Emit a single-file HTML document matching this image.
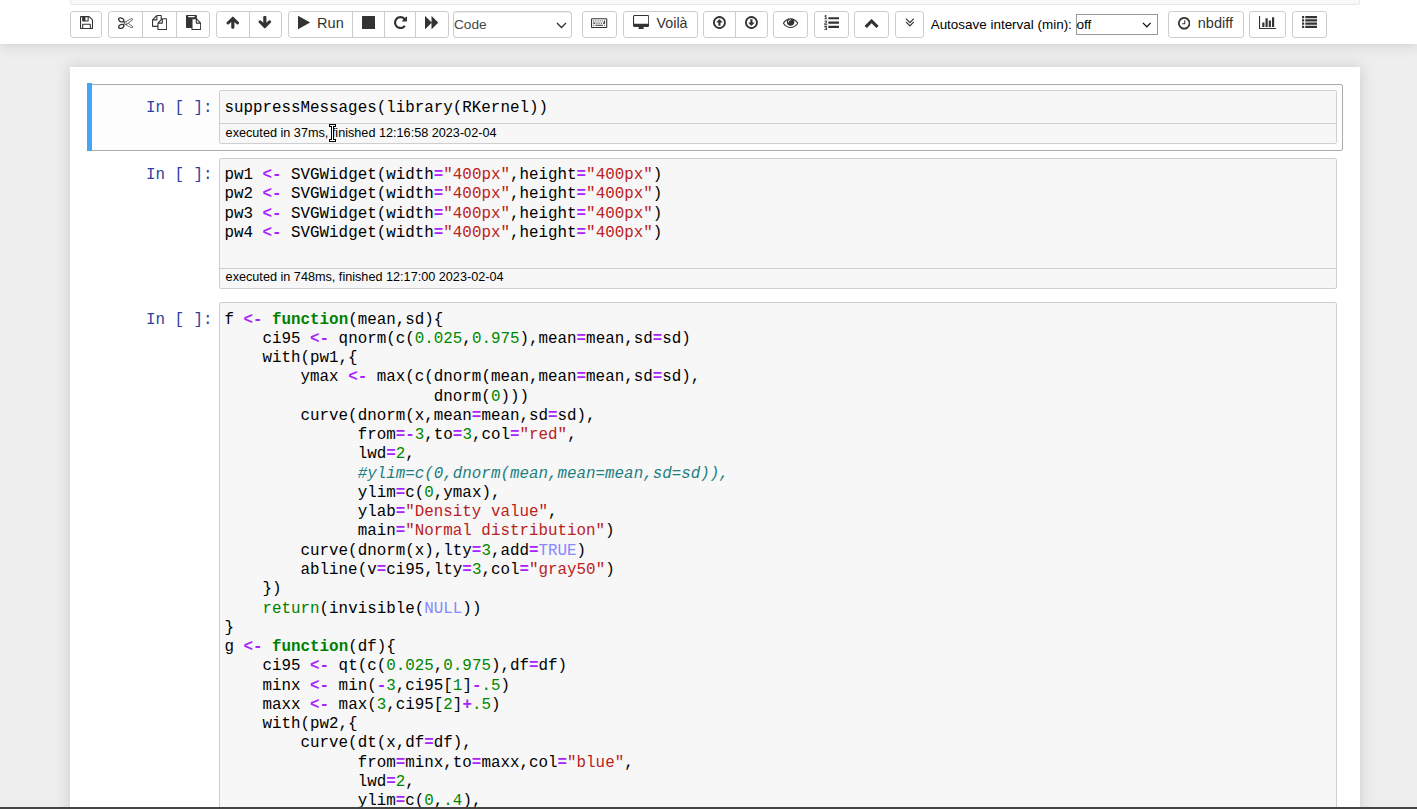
<!DOCTYPE html>
<html lang="en"><head><meta charset="utf-8"><title>Notebook</title>
<style>
html,body{margin:0;padding:0;overflow:hidden}
body{width:1417px;height:809px;overflow:hidden;position:relative;background:#eee;font-family:"Liberation Sans",Arial,sans-serif;font-size:14.3px;color:#333}
#site{position:absolute;left:0;top:0;width:1417px;height:809px;background:#eee}
#header{position:absolute;left:0;top:0;width:1417px;height:44px;background:#fff;box-shadow:0 0 13px 1px rgba(87,87,87,.2);z-index:10}
#menubar{position:absolute;left:70px;top:-30px;width:1288px;height:32.6px;background:#f8f8f8;border:1px solid #e7e7e7;border-radius:2.2px}
#nbc{position:absolute;left:70px;top:67px;width:1290px;height:800px;background:#fff;box-shadow:0 0 13px 1px rgba(87,87,87,.2);z-index:1}
#cells{position:absolute;left:0;top:0;z-index:2}
#bottombar{position:absolute;left:0;top:807px;width:1417px;height:2px;background:#444;z-index:20}
.btn{position:absolute;top:11px;height:27px;box-sizing:border-box;border:1px solid #ccc;background:#fff;border-radius:3.2px;text-align:center;white-space:nowrap;line-height:20px;color:#333;font-size:14.3px}
.btn.first{border-radius:3.2px 0 0 3.2px}
.btn.mid{border-radius:0}
.btn.last{border-radius:0 3.2px 3.2px 0}
.ic{position:absolute;display:block}
.lbl{position:absolute;white-space:nowrap;line-height:normal;color:#333}
.sel{position:absolute;box-sizing:border-box;border:1px solid #ccc;border-radius:3.2px;background:#fff;font-size:13.65px;color:#484848;box-shadow:inset 0 1px 1px rgba(0,0,0,.075)}
.seltxt{position:absolute;left:0.3px;top:4.0px;line-height:18px}
.chev{position:absolute;right:4.7px;top:9.7px}
.aslabel{position:absolute;font-size:13.45px;line-height:20px;color:#000;white-space:nowrap}
.sel2{position:absolute;box-sizing:border-box;border:1px solid #999;background:#fff;font-size:13.6px;color:#000}
.seltxt2{position:absolute;left:-0.2px;top:1.1px;line-height:18px}
.chev2{position:absolute;right:5.8px;top:7.6px}
.cell{position:absolute;left:87px;width:1256px;box-sizing:border-box;border:1px solid transparent;border-radius:2.2px;padding:5.5px;display:flex}
.cell.selected{border-color:#ababab;background:#fdfdfd;padding-top:5px;padding-bottom:6px}
.cell.selected:before{content:"";position:absolute;left:-1px;top:-2px;width:5px;height:calc(100% + 3px);background:#42A5F5}
.prompt{flex:0 0 125.6px;box-sizing:border-box;text-align:right;font-family:"Liberation Mono",monospace;font-size:15.87px;line-height:19.27px;padding:8.6px 6.6px 5px 0;color:#303F9F;white-space:pre}
.ia{flex:1 1 auto;box-sizing:border-box;border:1px solid #cfcfcf;border-radius:2.2px;background:#f7f7f7}
.cm{padding:7.55px 4.4px 5.1px 4.3px;font-family:"Liberation Mono",monospace;font-size:15.87px;line-height:19.27px;color:#000}
.cm pre{margin:0;font:inherit;white-space:pre}
.timing{border-top:1px solid #cfcfcf;padding:0 5.5px;font-size:12.67px;line-height:19.5px;color:#000;white-space:nowrap}
.k{color:#008000;font-weight:bold}
.b{color:#008000}
.a{color:#8888FF}
.o{color:#AA22FF;font-weight:bold}
.n{color:#008800}
.s{color:#BA2121}
.c{color:#1c8080;font-style:italic}
#cursor{position:absolute;left:329px;top:124px;z-index:30;line-height:0}
.c2 .cm{padding-bottom:5.5px}
.c2 .timing{line-height:17.1px;padding-bottom:2px}

</style></head>
<body>
<div id="site"></div>
<div id="nbc"></div>
<div id="cells">
<div class="cell selected" style="top:84px"><div class="prompt">In [ ]:</div><div class="ia"><div class="cm"><pre>suppressMessages(library(RKernel))</pre></div><div class="timing">executed in 37ms, finished 12:16:58 2023-02-04</div></div></div>
<div class="cell c2" style="top:151px"><div class="prompt">In [ ]:</div><div class="ia"><div class="cm"><pre>pw1 <span class="o">&lt;-</span> SVGWidget(width<span class="o">=</span><span class="s">&quot;400px&quot;</span>,height<span class="o">=</span><span class="s">&quot;400px&quot;</span>)</pre><pre>pw2 <span class="o">&lt;-</span> SVGWidget(width<span class="o">=</span><span class="s">&quot;400px&quot;</span>,height<span class="o">=</span><span class="s">&quot;400px&quot;</span>)</pre><pre>pw3 <span class="o">&lt;-</span> SVGWidget(width<span class="o">=</span><span class="s">&quot;400px&quot;</span>,height<span class="o">=</span><span class="s">&quot;400px&quot;</span>)</pre><pre>pw4 <span class="o">&lt;-</span> SVGWidget(width<span class="o">=</span><span class="s">&quot;400px&quot;</span>,height<span class="o">=</span><span class="s">&quot;400px&quot;</span>)</pre><pre> </pre></div><div class="timing">executed in 748ms, finished 12:17:00 2023-02-04</div></div></div>
<div class="cell" style="top:295.5px"><div class="prompt">In [ ]:</div><div class="ia"><div class="cm"><pre>f <span class="o">&lt;-</span> <span class="k">function</span>(mean,sd){</pre><pre>    ci95 <span class="o">&lt;-</span> qnorm(c(<span class="n">0.025</span>,<span class="n">0.975</span>),mean<span class="o">=</span>mean,sd<span class="o">=</span>sd)</pre><pre>    with(pw1,{</pre><pre>        ymax <span class="o">&lt;-</span> max(c(dnorm(mean,mean<span class="o">=</span>mean,sd<span class="o">=</span>sd),</pre><pre>                      dnorm(<span class="n">0</span>)))</pre><pre>        curve(dnorm(x,mean<span class="o">=</span>mean,sd<span class="o">=</span>sd),</pre><pre>              from<span class="o">=</span><span class="o">-</span><span class="n">3</span>,to<span class="o">=</span><span class="n">3</span>,col<span class="o">=</span><span class="s">&quot;red&quot;</span>,</pre><pre>              lwd<span class="o">=</span><span class="n">2</span>,</pre><pre>              <span class="c">#ylim=c(0,dnorm(mean,mean=mean,sd=sd)),</span></pre><pre>              ylim<span class="o">=</span>c(<span class="n">0</span>,ymax),</pre><pre>              ylab<span class="o">=</span><span class="s">&quot;Density value&quot;</span>,</pre><pre>              main<span class="o">=</span><span class="s">&quot;Normal distribution&quot;</span>)</pre><pre>        curve(dnorm(x),lty<span class="o">=</span><span class="n">3</span>,add<span class="o">=</span><span class="a">TRUE</span>)</pre><pre>        abline(v<span class="o">=</span>ci95,lty<span class="o">=</span><span class="n">3</span>,col<span class="o">=</span><span class="s">&quot;gray50&quot;</span>)</pre><pre>    })</pre><pre>    <span class="b">return</span>(invisible(<span class="a">NULL</span>))</pre><pre>}</pre><pre>g <span class="o">&lt;-</span> <span class="k">function</span>(df){</pre><pre>    ci95 <span class="o">&lt;-</span> qt(c(<span class="n">0.025</span>,<span class="n">0.975</span>),df<span class="o">=</span>df)</pre><pre>    minx <span class="o">&lt;-</span> min(<span class="o">-</span><span class="n">3</span>,ci95[<span class="n">1</span>]<span class="o">-</span><span class="n">.5</span>)</pre><pre>    maxx <span class="o">&lt;-</span> max(<span class="n">3</span>,ci95[<span class="n">2</span>]<span class="o">+</span><span class="n">.5</span>)</pre><pre>    with(pw2,{</pre><pre>        curve(dt(x,df<span class="o">=</span>df),</pre><pre>              from<span class="o">=</span>minx,to<span class="o">=</span>maxx,col<span class="o">=</span><span class="s">&quot;blue&quot;</span>,</pre><pre>              lwd<span class="o">=</span><span class="n">2</span>,</pre><pre>              ylim<span class="o">=</span>c(<span class="n">0</span>,<span class="n">.4</span>),</pre></div></div></div>
</div>
<div id="header">
<div id="menubar"></div>
<div class="btn solo" style="left:69.70px;width:32.50px"></div><svg class="ic" style="left:80.29px;top:14.97px" width="13.03" height="15.20" viewBox="0 0 1536 1792"><path fill="#333" transform="translate(0,1536) scale(1,-1)" d="M384 0h768v384h-768v-384zM1280 0h128v896q0 14 -10 38.5t-20 34.5l-281 281q-10 10 -34 20t-39 10v-416q0 -40 -28 -68t-68 -28h-576q-40 0 -68 28t-28 68v416h-128v-1280h128v416q0 40 28 68t68 28h832q40 0 68 -28t28 -68v-416zM896 928v320q0 13 -9.5 22.5t-22.5 9.5
h-192q-13 0 -22.5 -9.5t-9.5 -22.5v-320q0 -13 9.5 -22.5t22.5 -9.5h192q13 0 22.5 9.5t9.5 22.5zM1536 896v-928q0 -40 -28 -68t-68 -28h-1344q-40 0 -68 28t-28 68v1344q0 40 28 68t68 28h928q40 0 88 -20t76 -48l280 -280q28 -28 48 -76t20 -88z"/></svg>
<div class="btn first" style="left:107.80px;width:35.30px"></div><svg class="ic" style="left:117.85px;top:14.97px" width="15.20" height="15.20" viewBox="0 0 1792 1792"><path fill="#333" transform="translate(0,1536) scale(1,-1)" d="M960 640q26 0 45 -19t19 -45t-19 -45t-45 -19t-45 19t-19 45t19 45t45 19zM1260 576l507 -398q28 -20 25 -56q-5 -35 -35 -51l-128 -64q-13 -7 -29 -7q-17 0 -31 8l-690 387l-110 -66q-8 -4 -12 -5q14 -49 10 -97q-7 -77 -56 -147.5t-132 -123.5q-132 -84 -277 -84
q-136 0 -222 78q-90 84 -79 207q7 76 56 147t131 124q132 84 278 84q83 0 151 -31q9 13 22 22l122 73l-122 73q-13 9 -22 22q-68 -31 -151 -31q-146 0 -278 84q-82 53 -131 124t-56 147q-5 59 15.5 113t63.5 93q85 79 222 79q145 0 277 -84q83 -52 132 -123t56 -148
q4 -48 -10 -97q4 -1 12 -5l110 -66l690 387q14 8 31 8q16 0 29 -7l128 -64q30 -16 35 -51q3 -36 -25 -56zM579 836q46 42 21 108t-106 117q-92 59 -192 59q-74 0 -113 -36q-46 -42 -21 -108t106 -117q92 -59 192 -59q74 0 113 36zM494 91q81 51 106 117t-21 108
q-39 36 -113 36q-100 0 -192 -59q-81 -51 -106 -117t21 -108q39 -36 113 -36q100 0 192 59zM672 704l96 -58v11q0 36 33 56l14 8l-79 47l-26 -26q-3 -3 -10 -11t-12 -12q-2 -2 -4 -3.5t-3 -2.5zM896 480l96 -32l736 576l-128 64l-768 -431v-113l-160 -96l9 -8q2 -2 7 -6
q4 -4 11 -12t11 -12l26 -26zM1600 64l128 64l-520 408l-177 -138q-2 -3 -13 -7z"/></svg>
<div class="btn mid" style="left:142.10px;width:34.60px"></div><svg class="ic" style="left:151.80px;top:14.97px" width="15.20" height="15.20" viewBox="0 0 1792 1792"><path fill="#333" transform="translate(0,1536) scale(1,-1)" d="M1696 1152q40 0 68 -28t28 -68v-1216q0 -40 -28 -68t-68 -28h-960q-40 0 -68 28t-28 68v288h-544q-40 0 -68 28t-28 68v672q0 40 20 88t48 76l408 408q28 28 76 48t88 20h416q40 0 68 -28t28 -68v-328q68 40 128 40h416zM1152 939l-299 -299h299v299zM512 1323l-299 -299
h299v299zM708 676l316 316v416h-384v-416q0 -40 -28 -68t-68 -28h-416v-640h512v256q0 40 20 88t48 76zM1664 -128v1152h-384v-416q0 -40 -28 -68t-68 -28h-416v-640h896z"/></svg>
<div class="btn last" style="left:175.70px;width:34.70px"></div><svg class="ic" style="left:185.75px;top:14.97px" width="15.20" height="15.20" viewBox="0 0 1792 1792"><path fill="#333" transform="translate(0,1536) scale(1,-1)" d="M768 -128h896v640h-416q-40 0 -68 28t-28 68v416h-384v-1152zM1024 1312v64q0 13 -9.5 22.5t-22.5 9.5h-704q-13 0 -22.5 -9.5t-9.5 -22.5v-64q0 -13 9.5 -22.5t22.5 -9.5h704q13 0 22.5 9.5t9.5 22.5zM1280 640h299l-299 299v-299zM1792 512v-672q0 -40 -28 -68t-68 -28
h-960q-40 0 -68 28t-28 68v160h-544q-40 0 -68 28t-28 68v1344q0 40 28 68t68 28h1088q40 0 68 -28t28 -68v-328q21 -13 36 -28l408 -408q28 -28 48 -76t20 -88z"/></svg>
<div class="btn first" style="left:215.70px;width:34.50px"></div><svg class="ic" style="left:225.72px;top:15.40px" width="13.65" height="14.70" viewBox="0 0 1664 1792"><path fill="#333" transform="translate(0,1536) scale(1,-1)" d="M1611 565q0 -51 -37 -90l-75 -75q-38 -38 -91 -38q-54 0 -90 38l-294 293v-704q0 -52 -37.5 -84.5t-90.5 -32.5h-128q-53 0 -90.5 32.5t-37.5 84.5v704l-294 -293q-36 -38 -90 -38t-90 38l-75 75q-38 38 -38 90q0 53 38 91l651 651q35 37 90 37q54 0 91 -37l651 -651
q37 -39 37 -91z"/></svg>
<div class="btn last" style="left:249.20px;width:33.00px"></div><svg class="ic" style="left:258.48px;top:15.40px" width="13.65" height="14.70" viewBox="0 0 1664 1792"><path fill="#333" transform="translate(0,1536) scale(1,-1)" d="M1611 704q0 -53 -37 -90l-651 -652q-39 -37 -91 -37q-53 0 -90 37l-651 652q-38 36 -38 90q0 53 38 91l74 75q39 37 91 37q53 0 90 -37l294 -294v704q0 52 38 90t90 38h128q52 0 90 -38t38 -90v-704l294 294q37 37 90 37q52 0 91 -37l75 -75q37 -39 37 -91z"/></svg>
<div class="btn first" style="left:287.50px;width:65.40px"></div><svg class="ic" style="left:298.00px;top:14.97px" width="11.94" height="15.20" viewBox="0 0 1408 1792"><path fill="#333" transform="translate(0,1536) scale(1,-1)" d="M1384 609l-1328 -738q-23 -13 -39.5 -3t-16.5 36v1472q0 26 16.5 36t39.5 -3l1328 -738q23 -13 23 -31t-23 -31z"/></svg><span class="lbl" style="left:317.10px;top:14.88px;font-size:14.5px">Run</span>
<div class="btn mid" style="left:351.90px;width:32.80px"></div><svg class="ic" style="left:361.79px;top:14.97px" width="13.03" height="15.20" viewBox="0 0 1536 1792"><path fill="#333" transform="translate(0,1536) scale(1,-1)" d="M1536 1344v-1408q0 -26 -19 -45t-45 -19h-1408q-26 0 -45 19t-19 45v1408q0 26 19 45t45 19h1408q26 0 45 -19t19 -45z"/></svg>
<div class="btn mid" style="left:383.70px;width:32.30px"></div><svg class="ic" style="left:394.19px;top:14.97px" width="13.03" height="15.20" viewBox="0 0 1536 1792"><path fill="#333" transform="translate(0,1536) scale(1,-1)" d="M1536 1280v-448q0 -26 -19 -45t-45 -19h-448q-42 0 -59 40q-17 39 14 69l138 138q-148 137 -349 137q-104 0 -198.5 -40.5t-163.5 -109.5t-109.5 -163.5t-40.5 -198.5t40.5 -198.5t109.5 -163.5t163.5 -109.5t198.5 -40.5q119 0 225 52t179 147q7 10 23 12q15 0 25 -9
l137 -138q9 -8 9.5 -20.5t-7.5 -22.5q-109 -132 -264 -204.5t-327 -72.5q-156 0 -298 61t-245 164t-164 245t-61 298t61 298t164 245t245 164t298 61q147 0 284.5 -55.5t244.5 -156.5l130 129q29 31 70 14q39 -17 39 -59z"/></svg>
<div class="btn last" style="left:415.00px;width:34.20px"></div><svg class="ic" style="left:425.34px;top:14.97px" width="14.11" height="15.20" viewBox="0 0 1664 1792"><path fill="#333" transform="translate(0,1536) scale(1,-1)" d="M45 -115q-19 -19 -32 -13t-13 32v1472q0 26 13 32t32 -13l710 -710q9 -9 13 -19v710q0 26 13 32t32 -13l710 -710q19 -19 19 -45t-19 -45l-710 -710q-19 -19 -32 -13t-13 32v710q-4 -10 -13 -19z"/></svg>
<div class="sel" style="left:452.7px;width:119.5px;top:11px;height:27px"><span class="seltxt">Code</span><svg class="chev" width="11" height="7" viewBox="0 0 11 7"><path d="M1 1 L5.5 5.5 L10 1" fill="none" stroke="#333" stroke-width="1.4"/></svg></div>
<div class="btn solo" style="left:581.80px;width:35.50px"></div><svg class="ic" style="left:591.41px;top:14.97px" width="16.29" height="15.20" viewBox="0 0 1920 1792"><path fill="#333" transform="translate(0,1536) scale(1,-1)" d="M384 368v-96q0 -16 -16 -16h-96q-16 0 -16 16v96q0 16 16 16h96q16 0 16 -16zM512 624v-96q0 -16 -16 -16h-224q-16 0 -16 16v96q0 16 16 16h224q16 0 16 -16zM384 880v-96q0 -16 -16 -16h-96q-16 0 -16 16v96q0 16 16 16h96q16 0 16 -16zM1408 368v-96q0 -16 -16 -16
h-864q-16 0 -16 16v96q0 16 16 16h864q16 0 16 -16zM768 624v-96q0 -16 -16 -16h-96q-16 0 -16 16v96q0 16 16 16h96q16 0 16 -16zM640 880v-96q0 -16 -16 -16h-96q-16 0 -16 16v96q0 16 16 16h96q16 0 16 -16zM1024 624v-96q0 -16 -16 -16h-96q-16 0 -16 16v96q0 16 16 16
h96q16 0 16 -16zM896 880v-96q0 -16 -16 -16h-96q-16 0 -16 16v96q0 16 16 16h96q16 0 16 -16zM1280 624v-96q0 -16 -16 -16h-96q-16 0 -16 16v96q0 16 16 16h96q16 0 16 -16zM1664 368v-96q0 -16 -16 -16h-96q-16 0 -16 16v96q0 16 16 16h96q16 0 16 -16zM1152 880v-96
q0 -16 -16 -16h-96q-16 0 -16 16v96q0 16 16 16h96q16 0 16 -16zM1408 880v-96q0 -16 -16 -16h-96q-16 0 -16 16v96q0 16 16 16h96q16 0 16 -16zM1664 880v-352q0 -16 -16 -16h-224q-16 0 -16 16v96q0 16 16 16h112v240q0 16 16 16h96q16 0 16 -16zM1792 128v896h-1664v-896
h1664zM1920 1024v-896q0 -53 -37.5 -90.5t-90.5 -37.5h-1664q-53 0 -90.5 37.5t-37.5 90.5v896q0 53 37.5 90.5t90.5 37.5h1664q53 0 90.5 -37.5t37.5 -90.5z"/></svg>
<div class="btn solo" style="left:622.60px;width:75.60px"></div><svg class="ic" style="left:632.50px;top:14.97px" width="16.29" height="15.20" viewBox="0 0 1920 1792"><path fill="#333" transform="translate(0,1536) scale(1,-1)" d="M1792 544v832q0 13 -9.5 22.5t-22.5 9.5h-1600q-13 0 -22.5 -9.5t-9.5 -22.5v-832q0 -13 9.5 -22.5t22.5 -9.5h1600q13 0 22.5 9.5t9.5 22.5zM1920 1376v-1088q0 -66 -47 -113t-113 -47h-544q0 -37 16 -77.5t32 -71t16 -43.5q0 -26 -19 -45t-45 -19h-512q-26 0 -45 19
t-19 45q0 14 16 44t32 70t16 78h-544q-66 0 -113 47t-47 113v1088q0 66 47 113t113 47h1600q66 0 113 -47t47 -113z"/></svg><span class="lbl" style="left:656.55px;top:15.06px;font-size:14.3px">Voilà</span>
<div class="btn first" style="left:702.70px;width:33.40px"></div><svg class="ic" style="left:713.27px;top:15.14px" width="12.86" height="15.00" viewBox="0 0 1536 1792"><path fill="#333" transform="translate(0,1536) scale(1,-1)" d="M1118 660q-8 -20 -30 -20h-192v-352q0 -14 -9 -23t-23 -9h-192q-14 0 -23 9t-9 23v352h-192q-14 0 -23 9t-9 23q0 12 10 24l319 319q11 9 23 9t23 -9l320 -320q15 -16 7 -35zM768 1184q-148 0 -273 -73t-198 -198t-73 -273t73 -273t198 -198t273 -73t273 73t198 198
t73 273t-73 273t-198 198t-273 73zM1536 640q0 -209 -103 -385.5t-279.5 -279.5t-385.5 -103t-385.5 103t-279.5 279.5t-103 385.5t103 385.5t279.5 279.5t385.5 103t385.5 -103t279.5 -279.5t103 -385.5z"/></svg>
<div class="btn last" style="left:735.10px;width:33.10px"></div><svg class="ic" style="left:745.02px;top:15.14px" width="12.86" height="15.00" viewBox="0 0 1536 1792"><path fill="#333" transform="translate(0,1536) scale(1,-1)" d="M1120 608q0 -12 -10 -24l-319 -319q-11 -9 -23 -9t-23 9l-320 320q-15 16 -7 35q8 20 30 20h192v352q0 14 9 23t23 9h192q14 0 23 -9t9 -23v-352h192q14 0 23 -9t9 -23zM768 1184q-148 0 -273 -73t-198 -198t-73 -273t73 -273t198 -198t273 -73t273 73t198 198t73 273
t-73 273t-198 198t-273 73zM1536 640q0 -209 -103 -385.5t-279.5 -279.5t-385.5 -103t-385.5 103t-279.5 279.5t-103 385.5t103 385.5t279.5 279.5t385.5 103t385.5 -103t279.5 -279.5t103 -385.5z"/></svg>
<div class="btn solo" style="left:772.70px;width:35.60px"></div><svg class="ic" style="left:782.90px;top:14.97px" width="15.20" height="15.20" viewBox="0 0 1792 1792"><path fill="#333" transform="translate(0,1536) scale(1,-1)" d="M1664 576q-152 236 -381 353q61 -104 61 -225q0 -185 -131.5 -316.5t-316.5 -131.5t-316.5 131.5t-131.5 316.5q0 121 61 225q-229 -117 -381 -353q133 -205 333.5 -326.5t434.5 -121.5t434.5 121.5t333.5 326.5zM944 960q0 20 -14 34t-34 14q-125 0 -214.5 -89.5
t-89.5 -214.5q0 -20 14 -34t34 -14t34 14t14 34q0 86 61 147t147 61q20 0 34 14t14 34zM1792 576q0 -34 -20 -69q-140 -230 -376.5 -368.5t-499.5 -138.5t-499.5 139t-376.5 368q-20 35 -20 69t20 69q140 229 376.5 368t499.5 139t499.5 -139t376.5 -368q20 -35 20 -69z"/></svg>
<div class="btn solo" style="left:813.60px;width:35.50px"></div><svg class="ic" style="left:823.75px;top:14.97px" width="15.20" height="15.20" viewBox="0 0 1792 1792"><path fill="#333" transform="translate(0,1536) scale(1,-1)" d="M381 -84q0 -80 -54.5 -126t-135.5 -46q-106 0 -172 66l57 88q49 -45 106 -45q29 0 50.5 14.5t21.5 42.5q0 64 -105 56l-26 56q8 10 32.5 43.5t42.5 54t37 38.5v1q-16 0 -48.5 -1t-48.5 -1v-53h-106v152h333v-88l-95 -115q51 -12 81 -49t30 -88zM383 543v-159h-362
q-6 36 -6 54q0 51 23.5 93t56.5 68t66 47.5t56.5 43.5t23.5 45q0 25 -14.5 38.5t-39.5 13.5q-46 0 -81 -58l-85 59q24 51 71.5 79.5t105.5 28.5q73 0 123 -41.5t50 -112.5q0 -50 -34 -91.5t-75 -64.5t-75.5 -50.5t-35.5 -52.5h127v60h105zM1792 224v-192q0 -13 -9.5 -22.5
t-22.5 -9.5h-1216q-13 0 -22.5 9.5t-9.5 22.5v192q0 14 9 23t23 9h1216q13 0 22.5 -9.5t9.5 -22.5zM384 1123v-99h-335v99h107q0 41 0.5 121.5t0.5 121.5v12h-2q-8 -17 -50 -54l-71 76l136 127h106v-404h108zM1792 736v-192q0 -13 -9.5 -22.5t-22.5 -9.5h-1216
q-13 0 -22.5 9.5t-9.5 22.5v192q0 14 9 23t23 9h1216q13 0 22.5 -9.5t9.5 -22.5zM1792 1248v-192q0 -13 -9.5 -22.5t-22.5 -9.5h-1216q-13 0 -22.5 9.5t-9.5 22.5v192q0 13 9.5 22.5t22.5 9.5h1216q13 0 22.5 -9.5t9.5 -22.5z"/></svg>
<div class="btn solo" style="left:854.00px;width:35.20px"></div><svg class="ic" style="left:864.00px;top:14.97px" width="15.20" height="15.20" viewBox="0 0 1792 1792"><path fill="#333" transform="translate(0,1536) scale(1,-1)" d="M1683 205l-166 -165q-19 -19 -45 -19t-45 19l-531 531l-531 -531q-19 -19 -45 -19t-45 19l-166 165q-19 19 -19 45.5t19 45.5l742 741q19 19 45 19t45 -19l742 -741q19 -19 19 -45.5t-19 -45.5z"/></svg>
<div class="btn solo" style="left:894.80px;width:29.50px"></div><svg class="ic" style="left:904.66px;top:14.97px" width="9.77" height="15.20" viewBox="0 0 1152 1792"><path fill="#333" transform="translate(0,1536) scale(1,-1)" d="M1075 672q0 -13 -10 -23l-466 -466q-10 -10 -23 -10t-23 10l-466 466q-10 10 -10 23t10 23l50 50q10 10 23 10t23 -10l393 -393l393 393q10 10 23 10t23 -10l50 -50q10 -10 10 -23zM1075 1056q0 -13 -10 -23l-466 -466q-10 -10 -23 -10t-23 10l-466 466q-10 10 -10 23
t10 23l50 50q10 10 23 10t23 -10l393 -393l393 393q10 10 23 10t23 -10l50 -50q10 -10 10 -23z"/></svg>
<div class="aslabel" style="left:930.7px;top:14.9px">Autosave interval (min):</div>
<div class="sel2" style="left:1075.6px;width:82.8px;top:13.5px;height:21.5px"><span class="seltxt2">off</span><svg class="chev2" width="9.6" height="6.1" viewBox="0 0 11 7"><path d="M1 1 L5.5 5.5 L10 1" fill="none" stroke="#111" stroke-width="1.4"/></svg></div>
<div class="btn solo" style="left:1167.70px;width:76.60px"></div><svg class="ic" style="left:1178.00px;top:15.57px" width="12.43" height="14.50" viewBox="0 0 1536 1792"><path fill="#333" transform="translate(0,1536) scale(1,-1)" d="M896 992v-448q0 -14 -9 -23t-23 -9h-320q-14 0 -23 9t-9 23v64q0 14 9 23t23 9h224v352q0 14 9 23t23 9h64q14 0 23 -9t9 -23zM1312 640q0 148 -73 273t-198 198t-273 73t-273 -73t-198 -198t-73 -273t73 -273t198 -198t273 -73t273 73t198 198t73 273zM1536 640
q0 -209 -103 -385.5t-279.5 -279.5t-385.5 -103t-385.5 103t-279.5 279.5t-103 385.5t103 385.5t279.5 279.5t385.5 103t385.5 -103t279.5 -279.5t103 -385.5z"/></svg><span class="lbl" style="left:1197.75px;top:14.88px;font-size:14.5px">nbdiff</span>
<div class="btn solo" style="left:1248.80px;width:37.40px"></div><svg class="ic" style="left:1258.81px;top:14.97px" width="17.37" height="15.20" viewBox="0 0 2048 1792"><path fill="#333" transform="translate(0,1536) scale(1,-1)" d="M640 640v-512h-256v512h256zM1024 1152v-1024h-256v1024h256zM2048 0v-128h-2048v1536h128v-1408h1920zM1408 896v-768h-256v768h256zM1792 1280v-1152h-256v1152h256z"/></svg>
<div class="btn solo" style="left:1291.80px;width:35.50px"></div><svg class="ic" style="left:1301.95px;top:14.97px" width="15.20" height="15.20" viewBox="0 0 1792 1792"><path fill="#333" transform="translate(0,1536) scale(1,-1)" d="M256 224v-192q0 -13 -9.5 -22.5t-22.5 -9.5h-192q-13 0 -22.5 9.5t-9.5 22.5v192q0 13 9.5 22.5t22.5 9.5h192q13 0 22.5 -9.5t9.5 -22.5zM256 608v-192q0 -13 -9.5 -22.5t-22.5 -9.5h-192q-13 0 -22.5 9.5t-9.5 22.5v192q0 13 9.5 22.5t22.5 9.5h192q13 0 22.5 -9.5
t9.5 -22.5zM256 992v-192q0 -13 -9.5 -22.5t-22.5 -9.5h-192q-13 0 -22.5 9.5t-9.5 22.5v192q0 13 9.5 22.5t22.5 9.5h192q13 0 22.5 -9.5t9.5 -22.5zM1792 224v-192q0 -13 -9.5 -22.5t-22.5 -9.5h-1344q-13 0 -22.5 9.5t-9.5 22.5v192q0 13 9.5 22.5t22.5 9.5h1344
q13 0 22.5 -9.5t9.5 -22.5zM256 1376v-192q0 -13 -9.5 -22.5t-22.5 -9.5h-192q-13 0 -22.5 9.5t-9.5 22.5v192q0 13 9.5 22.5t22.5 9.5h192q13 0 22.5 -9.5t9.5 -22.5zM1792 608v-192q0 -13 -9.5 -22.5t-22.5 -9.5h-1344q-13 0 -22.5 9.5t-9.5 22.5v192q0 13 9.5 22.5
t22.5 9.5h1344q13 0 22.5 -9.5t9.5 -22.5zM1792 992v-192q0 -13 -9.5 -22.5t-22.5 -9.5h-1344q-13 0 -22.5 9.5t-9.5 22.5v192q0 13 9.5 22.5t22.5 9.5h1344q13 0 22.5 -9.5t9.5 -22.5zM1792 1376v-192q0 -13 -9.5 -22.5t-22.5 -9.5h-1344q-13 0 -22.5 9.5t-9.5 22.5v192
q0 13 9.5 22.5t22.5 9.5h1344q13 0 22.5 -9.5t9.5 -22.5z"/></svg>
</div>
<div id="cursor"><svg width="7" height="18" viewBox="0 0 7 18" shape-rendering="crispEdges"><path fill="#000" d="M0 0h7v3h-2v12h2v3h-7v-3h2v-12h-2z"/><path fill="#fff" d="M1 1h5v1h-2v14h2v1h-5v-1h2v-14h-2z"/></svg></div>
<div id="bottombar"></div>
</body></html>
